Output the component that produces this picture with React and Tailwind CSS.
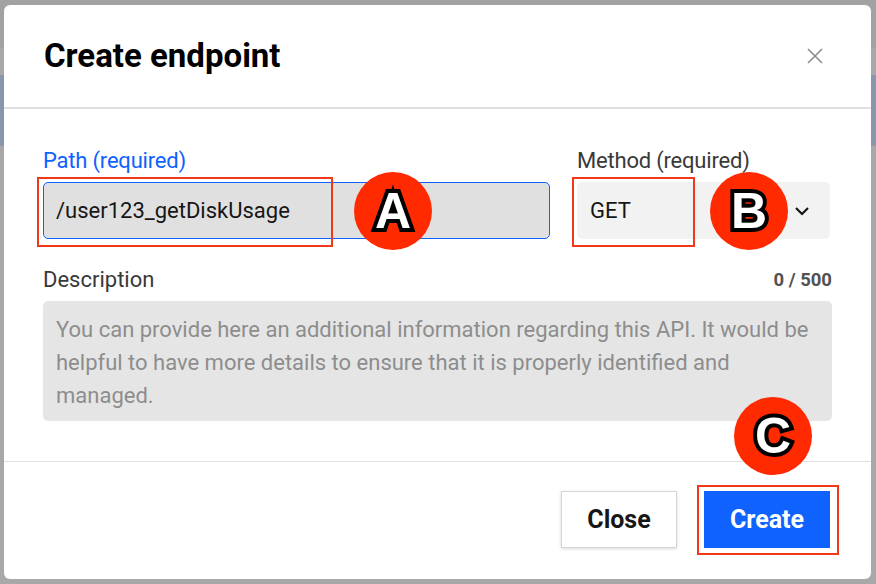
import React from "react";

function Badge({ letter, className }) {
  return (
    <div
      className={`absolute w-[78px] h-[78px] rounded-full bg-[#ff2a00] flex items-center justify-center ${className}`}
    >
      <span className="font-['Liberation_Sans',Arial,sans-serif] font-bold text-[50px] leading-none text-white [-webkit-text-stroke:8px_#000] [paint-order:stroke_fill] [text-shadow:2px_2px_2px_rgba(0,0,0,0.6)]">
        {letter}
      </span>
    </div>
  );
}

export default function App() {
  return (
    <div className="w-[876px] h-[584px] overflow-hidden pt-[5px] pl-[4px] bg-[linear-gradient(to_bottom,#a2a2a2_0px,#a2a2a2_48px,#a8a8a8_48px,#a8a8a8_75px,#8a96ab_75px,#8a96ab_146px,#a8a8a8_146px)] font-['Roboto',sans-serif]">
      <div className="relative w-[867px] h-[574px] bg-white rounded-[6px] flex flex-col">
        {/* Header */}
        <div className="h-[104px] shrink-0 flex items-center justify-between pl-[40px] pr-[47px] border-b-2 border-[#e0e0e0]">
          <h1 className="text-[33px] font-bold text-black">Create endpoint</h1>
          <svg width="18" height="18" viewBox="0 0 18 18" className="text-[#8c8c8c]">
            <path d="M2 2L16 16M16 2L2 16" stroke="currentColor" strokeWidth="1.6" />
          </svg>
        </div>

        {/* Body */}
        <div className="px-[39px] pt-[40px] flex flex-col">
          <div className="grid grid-cols-[507px_253px] gap-x-[27px]">
            <div className="flex flex-col gap-[9px]">
              <label className="text-[22px] leading-[24px] text-[#0f62fe] tracking-[-0.2px]">Path (required)</label>
              <div className="h-[57px] rounded-[5px] border border-[#0f62fe] bg-[#e0e0e0] flex items-center pl-[12px] text-[22px] text-[#161616]">
                /user123_getDiskUsage
              </div>
            </div>
            <div className="flex flex-col gap-[9px]">
              <label className="text-[22px] leading-[24px] text-[#393939] tracking-[-0.2px]">Method (required)</label>
              <div className="h-[57px] rounded-[5px] bg-[#f2f2f2] flex items-center justify-between pl-[13px] pr-[20px] text-[22px] text-[#161616]">
                <span>GET</span>
                <svg width="16" height="10" viewBox="0 0 16 10">
                  <path d="M2 2L8 8L14 2" fill="none" stroke="#161616" strokeWidth="2.2" />
                </svg>
              </div>
            </div>
          </div>

          <div className="mt-[29px] flex items-center justify-between">
            <span className="text-[22px] leading-[24px] text-[#393939]">Description</span>
            <span className="text-[18.5px] leading-[24px] font-bold text-[#525252]">0 / 500</span>
          </div>
          <div className="mt-[9px] h-[120px] rounded-[5px] bg-[#e5e5e5] pl-[13px] pr-[10px] pt-[12px] text-[22px] leading-[33px] text-[#8d8d8d]">
            You can provide here an additional information regarding this API. It would be helpful to have more details to ensure that it is properly identified and managed.
          </div>
        </div>

        {/* Footer */}
        <div className="mt-[40px] border-t border-[#e0e0e0] flex justify-end gap-[27px] pt-[29px] pr-[41px]">
          <button className="w-[116px] h-[57px] bg-white border border-[#d6d6d6] shadow-[0_1px_3px_rgba(0,0,0,0.15)] text-[25px] font-bold text-[#161616]">
            Close
          </button>
          <button className="w-[126px] h-[57px] bg-[#0f62fe] text-[25px] font-bold text-white">
            Create
          </button>
        </div>

        {/* Annotation overlays */}
        <div className="absolute left-[33px] top-[172px] w-[296px] h-[70px] border-2 border-[#f0391c]" />
        <div className="absolute left-[568px] top-[172px] w-[123px] h-[70px] border-2 border-[#f0391c]" />
        <div className="absolute left-[693px] top-[480px] w-[142px] h-[70px] border-2 border-[#f0391c]" />
        <Badge letter="A" className="left-[350px] top-[167px]" />
        <Badge letter="B" className="left-[706px] top-[167px]" />
        <Badge letter="C" className="left-[730px] top-[392px]" />
      </div>
    </div>
  );
}
